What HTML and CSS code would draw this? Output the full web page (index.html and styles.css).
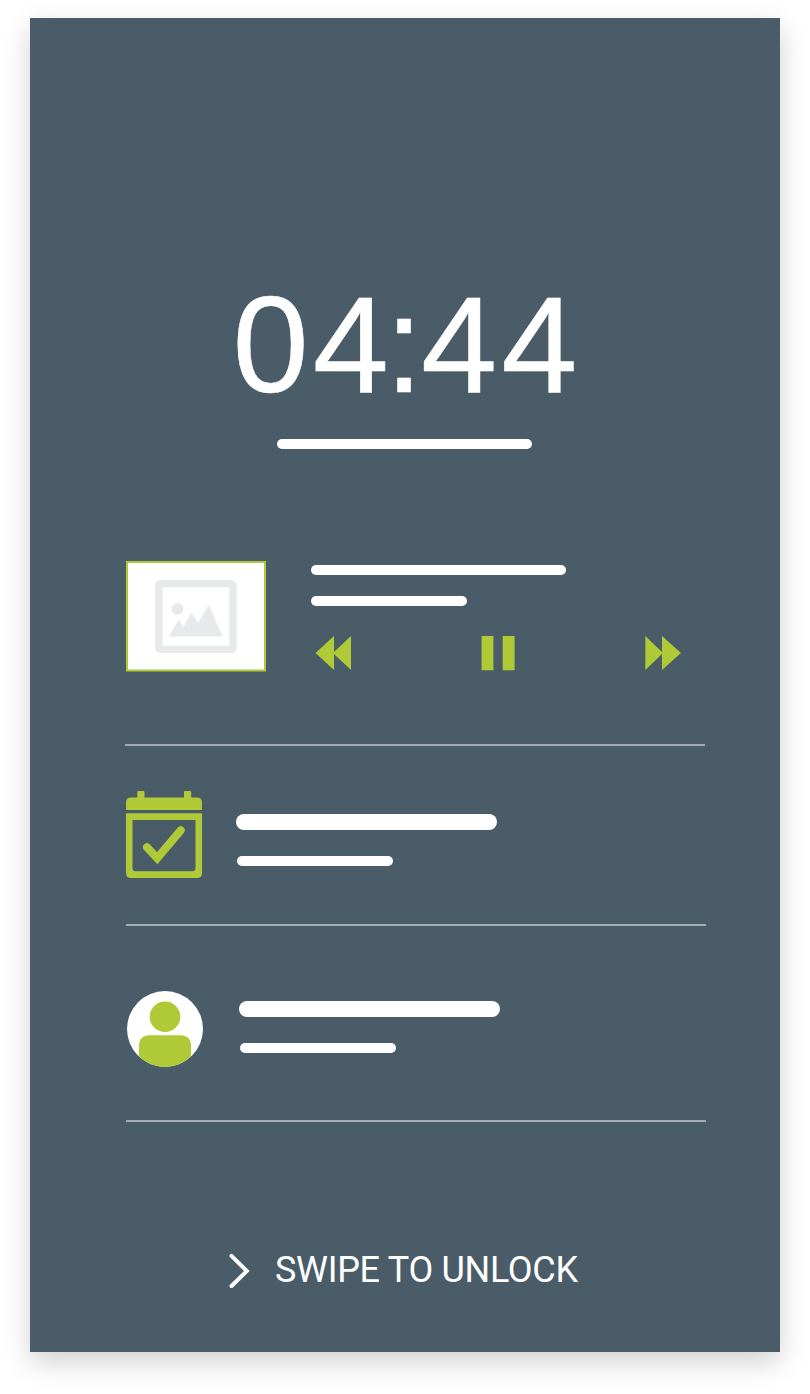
FILE: index.html
```html
<!DOCTYPE html>
<html lang="en">
<head>
<meta charset="utf-8">
<title>Lock screen</title>
<link rel="stylesheet" href="styles.css">
</head>
<body>
<main class="phone">
  <header class="clock">
    <div class="time">0<span class="hour-end">4</span><span class="colon">:</span>44</div>
    <div class="bar bar-long"></div>
  </header>
  <section class="player">
    <div class="cover">
      <svg width="140" height="111" viewBox="0 0 140 111">
        <rect width="140" height="110.5" fill="#afca36"/>
        <rect x="2" y="2" width="136" height="106.5" fill="#fff"/>
        <rect x="32.8" y="22.6" width="74.2" height="65.8" rx="2" fill="none" stroke="#e7e9eb" stroke-width="7.4" />
        <circle cx="51.5" cy="47.8" r="5.8" fill="#e7e9eb"/>
        <path d="M43 75.5 52.7 58.5 57.5 66 65.6 51.5 72 62 82.6 43.8 96.6 75.5z" fill="#e7e9eb"/>
      </svg>
    </div>
    <div class="track">
      <div class="bar bar-long"></div>
      <div class="bar bar-short"></div>
      <div class="controls">
        <svg width="36" height="36" viewBox="0 0 36 36"><path d="M.5 18 19 1v16L36 1v34L19 19v16z"/></svg>
        <svg width="34" height="36" viewBox="0 0 34 36"><path d="M.6 1h11.8v34.2H.6zM21.7 1h11.9v34.2H21.7z"/></svg>
        <svg width="36" height="36" viewBox="0 0 36 36"><path d="M.3 1 17 17V1l19 17-19 17V19L.3 35z"/></svg>
      </div>
    </div>
  </section>
  <section class="notice event">
    <svg width="76" height="88" viewBox="0 0 76 88" fill="#afca36">
      <path d="M0 20V12.500Q0 7.500 5 7.500h6.300V2Q11.300 1 12.300 1h5.200q1 0 1 1V7.500h39.500V2q0-1 1-1h5.200q1 0 1 1V7.500H71q5 0 5 5v7.500z"/>
      <path fill-rule="evenodd" d="M0 23.200h76V83q0 5-5 5H5q-5 0-5-5zM6.500 30v48.200q0 3 3 3h57q3 0 3-3V30z"/>
      <path d="m21 57.200 10.200 11L54.700 40.300" fill="none" stroke="#afca36" stroke-width="8" stroke-linecap="round"/>
    </svg>
    <div class="lines">
      <div class="bar bar-title"></div>
      <div class="bar bar-short"></div>
    </div>
  </section>
  <section class="notice contact">
    <svg width="76" height="76" viewBox="0 0 76 76">
      <clipPath id="avatar"><circle cx="38" cy="38" r="38"/></clipPath>
      <circle cx="38" cy="38" r="38" fill="#fff"/>
      <g clip-path="url(#avatar)" fill="#afca36">
        <circle cx="38" cy="25.700" r="15.300"/>
        <path d="M12 76V55q0-10.800 11-10.800h30q11 0 11 10.800v21z"/>
      </g>
    </svg>
    <div class="lines">
      <div class="bar bar-title"></div>
      <div class="bar bar-short"></div>
    </div>
  </section>
  <footer class="unlock">
    <svg width="22" height="36" viewBox="0 0 22 36"><path d="M3.500 2.800 18.800 18 3.500 33" fill="none" stroke="#fff" stroke-width="4" stroke-linecap="round"/></svg>
    <span class="unlock-text">SWIPE TO UNLOCK</span>
  </footer>
</main>
</body>
</html>
```

FILE: styles.css
```css
* { box-sizing: border-box; }
body { margin: 0; background: #fff; overflow: hidden; }
svg { display: block; flex: none; }

.phone {
  width: 750px;
  height: 1334px;
  margin: 18px 30px 42px;
  background: #4b5c69;
  box-shadow: 0 10px 26px rgba(0, 8, 12, 0.19);
  color: #fff;
  display: flex;
  flex-direction: column;
}

.bar { height: 10px; border-radius: 5px; background: #fff; }
.bar-long { width: 255px; }
.bar-short { width: 156px; }
.bar-title { width: 261px; height: 16px; border-radius: 8px; }

.clock { height: 543px; padding-top: 257px; }
.time {
  height: 164px;
  margin-left: 202.500px;
  font: 137px/140px "Liberation Sans", Arial, sans-serif;
  letter-spacing: 4px;
  white-space: nowrap;
  -webkit-text-stroke: 0.5px #fff;
}
.hour-end { letter-spacing: -4px; }
.colon { letter-spacing: -2px; }
.clock .bar { margin-left: 247px; }

.player {
  width: 580px;
  height: 185px;
  margin-left: 95px;
  padding-left: 1px;
  display: flex;
  gap: 45px;
  border-bottom: 2px solid #a1a9b0;
}
.track { padding-top: 4px; }
.track .bar-short { margin-top: 21px; }
.controls {
  width: 366px;
  margin: 29px 0 0 4px;
  display: flex;
  justify-content: space-between;
  fill: #afca36;
}

.notice {
  width: 580px;
  margin-left: 96px;
  display: flex;
  border-bottom: 2px solid #a4adb4;
}
.event { height: 180px; padding-top: 44px; gap: 34px; }
.contact { height: 196px; padding: 65px 0 0 1px; gap: 36px; }
.event .lines { padding-top: 24px; }
.contact .lines { padding-top: 10px; }
.lines .bar-short { margin: 26px 0 0 1px; }

.unlock {
  padding: 131px 0 0 198px;
  display: flex;
  gap: 25px;
}
.unlock-text {
  font: 36px/34px Roboto, sans-serif;
  letter-spacing: -0.3px;
  white-space: nowrap;
}
```
